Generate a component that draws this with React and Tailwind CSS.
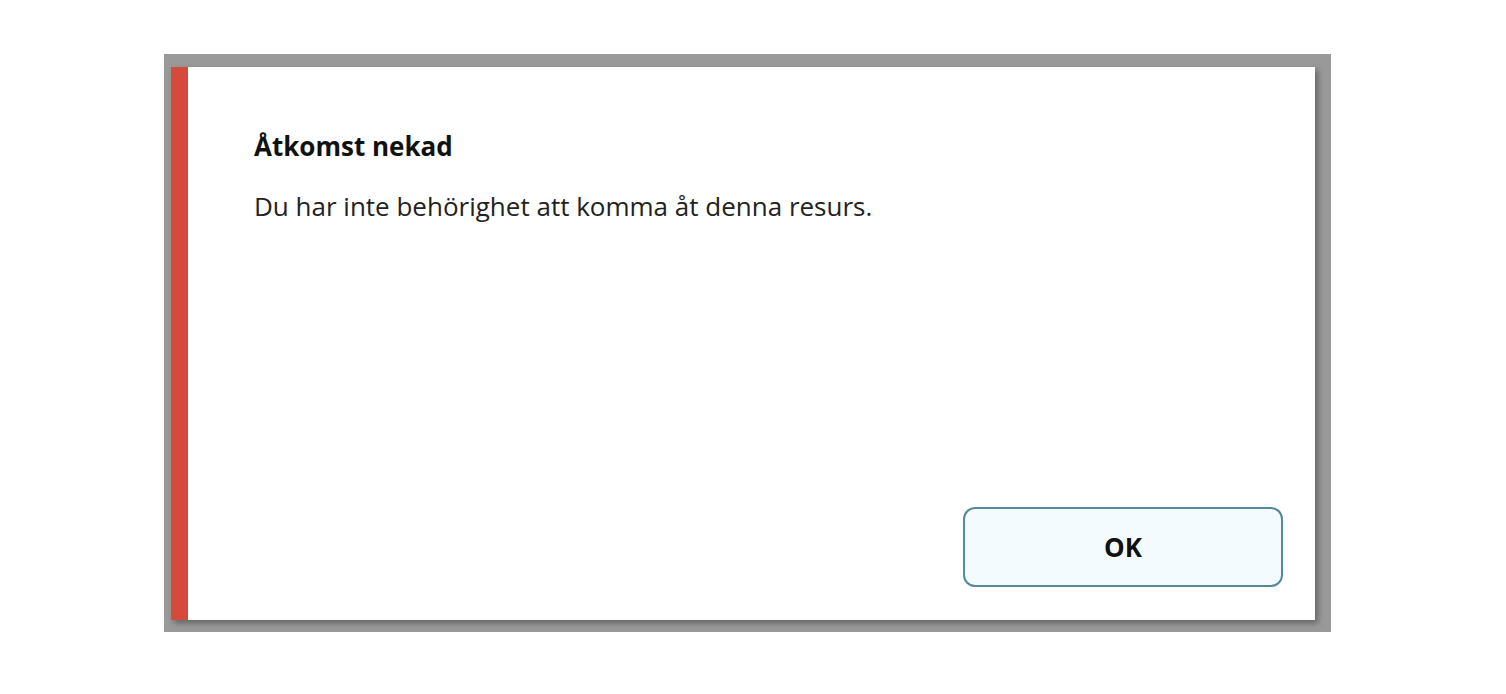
export default function App() {
  return (
    <div className="h-[694px] w-[1506px] bg-white pt-[54px] pl-[164px]" style={{ fontFamily: '"Open Sans", "Noto Sans", sans-serif' }}>
      <div className="flex h-[578px] w-[1167px] bg-[#999999] pt-[13px] pl-[7px] pr-[16px] pb-[12px]">
        <div className="flex flex-1 bg-white shadow-[3px_3px_6px_rgba(0,0,0,0.35)]">
          <div className="w-[17px] bg-[#d64a3c]" />
          <div className="flex flex-1 flex-col pl-[66px] pr-[32px] pt-[62px] pb-[33px]">
            <h1 className="text-[26px] leading-[34px] font-bold text-[#111]">Åtkomst nekad</h1>
            <p className="mt-[26px] text-[26px] leading-[34px] text-[#222]">
              Du har inte behörighet att komma åt denna resurs.
            </p>
            <div className="mt-auto flex justify-end">
              <button className="h-[80px] w-[320px] rounded-[12px] border-2 border-[#53899b] bg-[#f4fbff] text-[26px] font-bold text-[#111]">
                OK
              </button>
            </div>
          </div>
        </div>
      </div>
    </div>
  )
}
